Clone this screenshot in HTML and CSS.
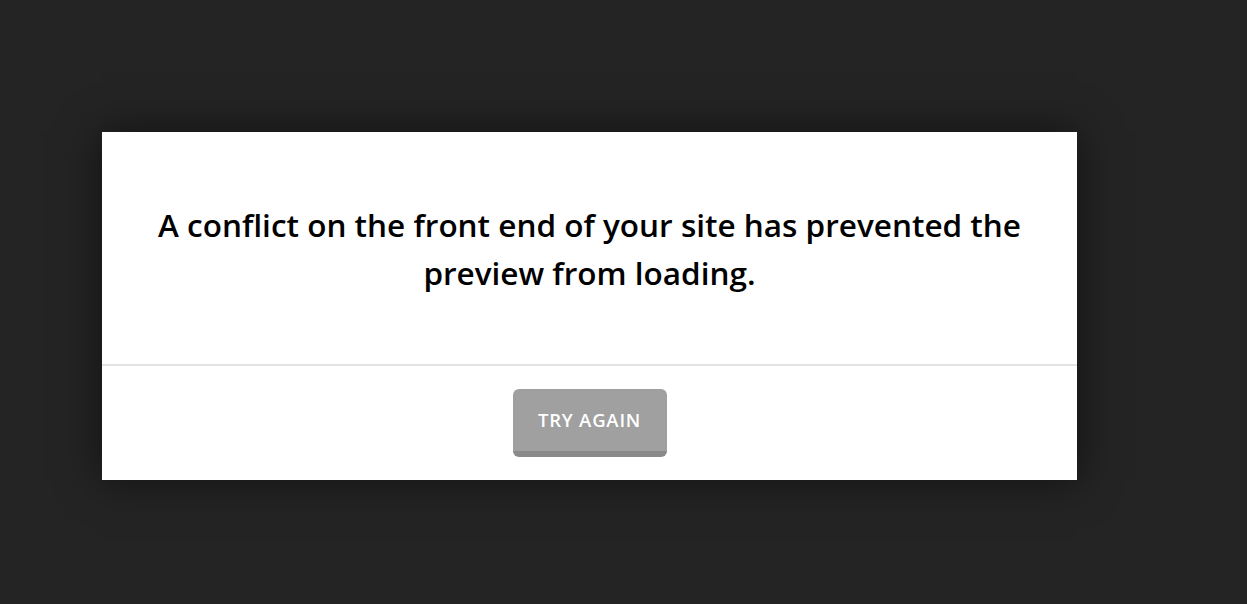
FILE: index.html
```html
<!DOCTYPE html>
<html>
<head>
    <title>Preview</title>
    <link rel="stylesheet" href="styles.css">
</head>
<body>
    <div class="modal">
        <div class="modal-body">
            <p class="message">A conflict on the front end of your site has prevented the preview from loading.</p>
        </div>
        <div class="modal-footer">
            <button class="retry-btn">Try Again</button>
        </div>
    </div>
</body>
</html>
```

FILE: styles.css
```css
body {
    margin: 0;
    background-color: #242424;
    font-family: "Open Sans", Arial, sans-serif;
    height: 604px;
    overflow: hidden;
}

.modal {
    width: 975px;
    margin-left: 102px;
    margin-top: 132px;
    background-color: #fff;
    box-shadow: 0 0 40px rgba(0, 0, 0, 0.55);
}

.modal-body {
    height: 234px;
    display: flex;
    align-items: center;
    justify-content: center;
    border-bottom: 2px solid #e3e3e3;
    box-sizing: border-box;
    padding: 2px 40px 0;
}

.message {
    margin: 0;
    text-align: center;
    font-size: 31.5px;
    font-weight: 600;
    line-height: 48px;
    color: #000;
}

.modal-footer {
    display: flex;
    justify-content: center;
    padding: 23px 0;
}

.retry-btn {
    width: 154px;
    height: 68px;
    background-color: #a0a0a0;
    border: none;
    border-bottom: 6px solid #8a8a8a;
    border-radius: 6px;
    color: #fff;
    font-family: "Open Sans", Arial, sans-serif;
    font-size: 18.5px;
    font-weight: 600;
    letter-spacing: 0.8px;
    text-transform: uppercase;
    padding: 0 0 2px;
    cursor: pointer;
}
```
